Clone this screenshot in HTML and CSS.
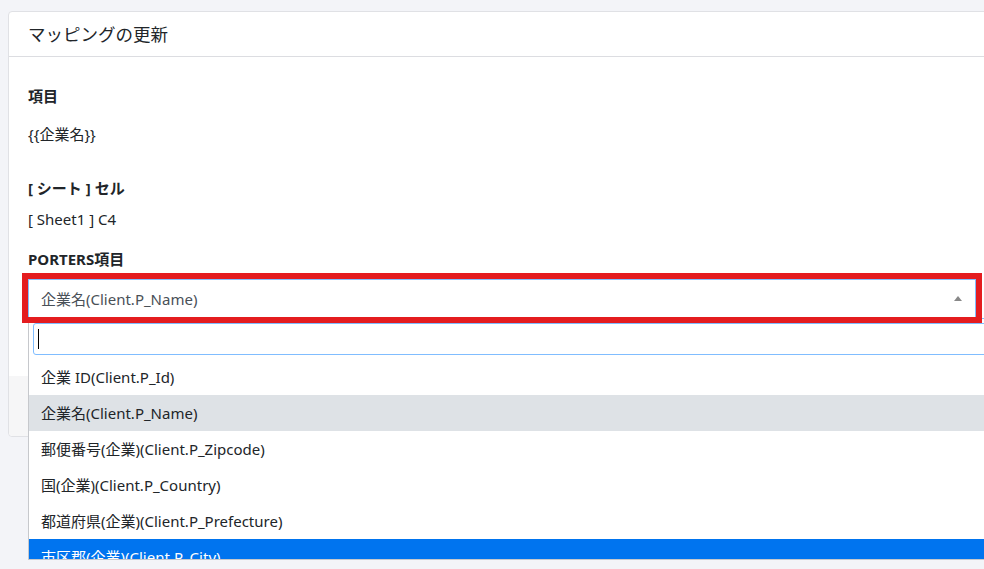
FILE: index.html
```html
<!DOCTYPE html>
<html lang="ja">
<head>
<meta charset="utf-8">
<link rel="stylesheet" href="styles.css">
</head>
<body>
<div class="page">
  <div class="card">
    <div class="card-header">マッピングの更新</div>
    <div class="card-body">
      <div class="label">項目</div>
      <div class="value v1">{{企業名}}</div>
      <div class="label">[ シート ] セル</div>
      <div class="value v2">[ Sheet1 ] C4</div>
      <div class="label">PORTERS項目</div>
      <div class="select-wrap">
        <div class="select">
          <span class="select-text">企業名(Client.P_Name)</span>
          <span class="arrow"></span>
        </div>
        <div class="highlight"></div>
        <div class="dropdown">
          <div class="search"><div class="search-input"><span class="caret"></span></div></div>
          <ul class="results">
            <li>企業 ID(Client.P_Id)</li>
            <li class="selected">企業名(Client.P_Name)</li>
            <li>郵便番号(企業)(Client.P_Zipcode)</li>
            <li>国(企業)(Client.P_Country)</li>
            <li>都道府県(企業)(Client.P_Prefecture)</li>
            <li class="active">市区郡(企業)(Client.P_City)</li>
            <li>町名・番地(企業)(Client.P_Street)</li>
          </ul>
        </div>
      </div>
    </div>
    <div class="card-footer"></div>
  </div>
</div>
</body>
</html>
```
FILE: styles.css
```css
html, body {
  margin: 0;
  padding: 0;
  background: #f3f4f8;
  overflow: hidden;
  height: 569px;
}
body {
  font-family: "Noto Sans", "Noto Sans CJK JP", sans-serif;
  font-size: 15px;
  color: #212529;
}
.page {
  padding: 11px 0 0 8px;
}
.card {
  width: 990px;
  background: #fff;
  border: 1px solid #e0e1e5;
  border-radius: 4px;
}
.card-header {
  height: 44px;
  line-height: 44px;
  padding: 0 19px;
  font-size: 17.5px;
  border-bottom: 1px solid #dcdde1;
  font-family: "Noto Sans CJK JP", sans-serif;
}
.card-body {
  padding: 28px 20px 58px 19px;
}
.label {
  font-weight: bold;
  line-height: 22px;
}
.value { line-height: 22px; }
.v1 { margin-top: 16px; margin-bottom: 32px; }
.v2 { margin-top: 9px; margin-bottom: 18px; }
.select-wrap {
  position: relative;
  margin-top: 9px;
  width: 948px;
}
.select {
  height: 37px;
  border: 1px solid #80bdff;
  display: flex;
  align-items: center;
  padding: 0 12px;
  color: #495057;
  position: relative;
}
.select-text { flex: 1; }
.arrow {
  width: 0;
  height: 0;
  border-style: solid;
  border-width: 0 4px 5px 4px;
  border-color: transparent transparent #888 transparent;
  margin-right: 1px;
}
.highlight {
  position: absolute;
  left: -6px;
  top: -6px;
  right: -6px;
  bottom: -5px;
  border: 6px solid #e41c1f;
  pointer-events: none;
  z-index: 3;
}
.dropdown {
  position: absolute;
  left: 0;
  top: 39px;
  width: 1000px;
  background: #fff;
  border: 1px solid #c6c8cc;
  border-top-color: #80bdff;
  z-index: 2;
}
.search {
  padding: 4px;
}
.search-input {
  height: 30px;
  border: 1px solid #80bdff;
  border-radius: 3px;
  display: flex;
  align-items: center;
  padding-left: 4px;
}
.caret {
  width: 1px;
  height: 20px;
  background: #000;
}
.results {
  list-style: none;
  margin: 0;
  padding: 0;
  max-height: 200px;
  overflow: hidden;
}
.results li {
  height: 36px;
  line-height: 36px;
  padding: 0 12px;
  white-space: nowrap;
}
.results li.selected { background: #dee2e6; }
.results li.active { background: #0074ef; color: #fff; }
.card-footer {
  height: 60px;
  background: #f6f6f7;
  border-radius: 0 0 4px 4px;
}
```
